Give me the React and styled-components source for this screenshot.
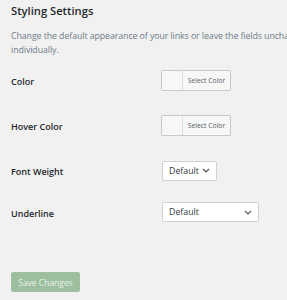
import React from 'react'
import styled, { createGlobalStyle } from 'styled-components';

const Global = createGlobalStyle`
    body {
        margin: 0;
        background: #f1f1f1;
        font-family: "Open Sans", "Noto Sans", sans-serif;
        color: #23282d;
    }
`;

const rows = [
    { label: 'Color', kind: 'color', height: 45 },
    { label: 'Hover Color', kind: 'color', height: 45 },
    { label: 'Font Weight', kind: 'select', value: 'Default', width: 55, height: 45 },
    { label: 'Underline', kind: 'select', value: 'Default', width: 97, height: 38 },
];

const Chevron = () => (
    <svg width="8" height="5" viewBox="0 0 8 5">
        <path d="M1 1 L4 4 L7 1" fill="none" stroke="#50575e" strokeWidth="1.2" />
    </svg>
);

const App = () => {
    return (
        <Wrapper>
            <Global />
            <Title>Styling Settings</Title>
            <Description>
                Change the default appearance of your links or leave the fields unchanged to style them individually.
            </Description>
            <Form>
                {rows.map(row => (
                    <Row key={row.label} rowHeight={row.height}>
                        <Label>{row.label}</Label>
                        {row.kind === 'color' ? (
                            <Picker>
                                <Swatch />
                                <PickerText>Select Color</PickerText>
                            </Picker>
                        ) : (
                            <Select selectWidth={row.width}>
                                <span>{row.value}</span>
                                <Chevron />
                            </Select>
                        )}
                    </Row>
                ))}
            </Form>
            <Footer>
                <SaveButton>Save Changes</SaveButton>
            </Footer>
        </Wrapper>
    )
}

const Wrapper = styled.div`
    padding: 3px 0 0 11px;
    width: 276px;
    overflow: hidden;
`;
const Title = styled.h2`
    margin: 0;
    font-size: 11.2px;
    font-weight: 600;
    line-height: 16px;
    color: #23282d;
`;
const Description = styled.p`
    margin: 10px 0 0;
    font-size: 8.8px;
    letter-spacing: -0.08px;
    line-height: 14px;
    color: #6f7b89;
    width: 370px;
`;
const Form = styled.div`
    margin-top: 1px;
    display: flex;
    flex-direction: column;
`;
const Row = styled.div`
    display: flex;
    align-items: center;
    height: ${props => props.rowHeight}px;
`;
const Label = styled.div`
    width: 150px;
    font-size: 9px;
    font-weight: 600;
    padding-top: 2px;
`;
const Picker = styled.div`
    display: flex;
    width: 70px;
    height: 21px;
    box-sizing: border-box;
    border: 1px solid #c8c8c8;
    border-radius: 2px;
    background: #f7f7f7;
    overflow: hidden;
`;
const Swatch = styled.div`
    width: 20px;
    border-right: 1px solid #dcdcdc;
    background: #f7f7f7;
`;
const PickerText = styled.div`
    flex: 1;
    display: flex;
    align-items: center;
    justify-content: center;
    font-size: 6.8px;
    color: #555d66;
`;
const Select = styled.div`
    display: flex;
    align-items: center;
    justify-content: space-between;
    width: ${props => props.selectWidth}px;
    height: 20px;
    box-sizing: border-box;
    margin-left: 1px;
    padding: 0 6px 0 6px;
    border: 1px solid #d0d0d0;
    border-radius: 2px;
    background: #fff;
    font-size: 8.8px;
    color: #32373c;
`;
const Footer = styled.div`
    margin-top: 41px;
`;
const SaveButton = styled.button`
    display: block;
    width: 69px;
    height: 20px;
    padding: 0;
    border: 1px solid #9fc0a1;
    border-radius: 2px;
    background: #9dbf9f;
    color: #e8f0e8;
    font-family: inherit;
    font-size: 8.5px;
`;
export default App;
